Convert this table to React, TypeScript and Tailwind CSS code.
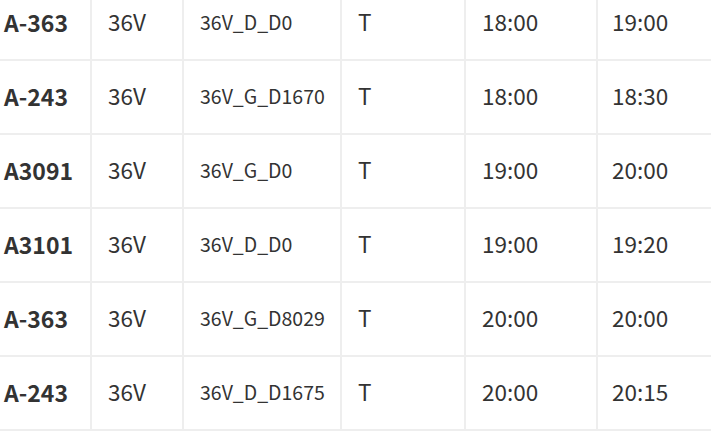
import React from "react";

const rows = [
  ["A-363", "36V", "36V_D_D0", "T", "18:00", "19:00"],
  ["A-243", "36V", "36V_G_D1670", "T", "18:00", "18:30"],
  ["A3091", "36V", "36V_G_D0", "T", "19:00", "20:00"],
  ["A3101", "36V", "36V_D_D0", "T", "19:00", "19:20"],
  ["A-363", "36V", "36V_G_D8029", "T", "20:00", "20:00"],
  ["A-243", "36V", "36V_D_D1675", "T", "20:00", "20:15"],
];

export default function App() {
  return (
    <div
      className="w-[711px] h-[431px] overflow-hidden bg-white text-[#333333]"
      style={{ fontFamily: '"Noto Sans CJK SC", "Noto Sans", sans-serif' }}
    >
      <div className="-ml-[16px] -mt-[15px] border-l-2 border-t-2 border-[#eeeeee] w-[760px]">
        {rows.map((r, i) => (
          <div key={i} className="flex h-[74px]">
            <div className="w-[106px] shrink-0 border-r-2 border-b-2 border-[#eeeeee] pl-[18px] pb-[2px] flex items-center text-[23px] font-bold">
              {r[0]}
            </div>
            <div className="w-[92px] shrink-0 border-r-2 border-b-2 border-[#eeeeee] pl-[16px] pb-[2px] flex items-center text-[22.5px]">
              {r[1]}
            </div>
            <div className="w-[158px] shrink-0 border-r-2 border-b-2 border-[#eeeeee] pl-[16px] pb-[2px] flex items-center text-[19.5px]">
              {r[2]}
            </div>
            <div className="w-[124px] shrink-0 border-r-2 border-b-2 border-[#eeeeee] pl-[16px] pb-[2px] flex items-center text-[22.5px]">
              {r[3]}
            </div>
            <div className="w-[132px] shrink-0 border-r-2 border-b-2 border-[#eeeeee] pl-[16px] pb-[2px] flex items-center text-[22.5px]">
              {r[4]}
            </div>
            <div className="flex-1 border-r-2 border-b-2 border-[#eeeeee] pl-[14px] pb-[2px] flex items-center text-[22.5px]">
              {r[5]}
            </div>
          </div>
        ))}
      </div>
    </div>
  );
}
